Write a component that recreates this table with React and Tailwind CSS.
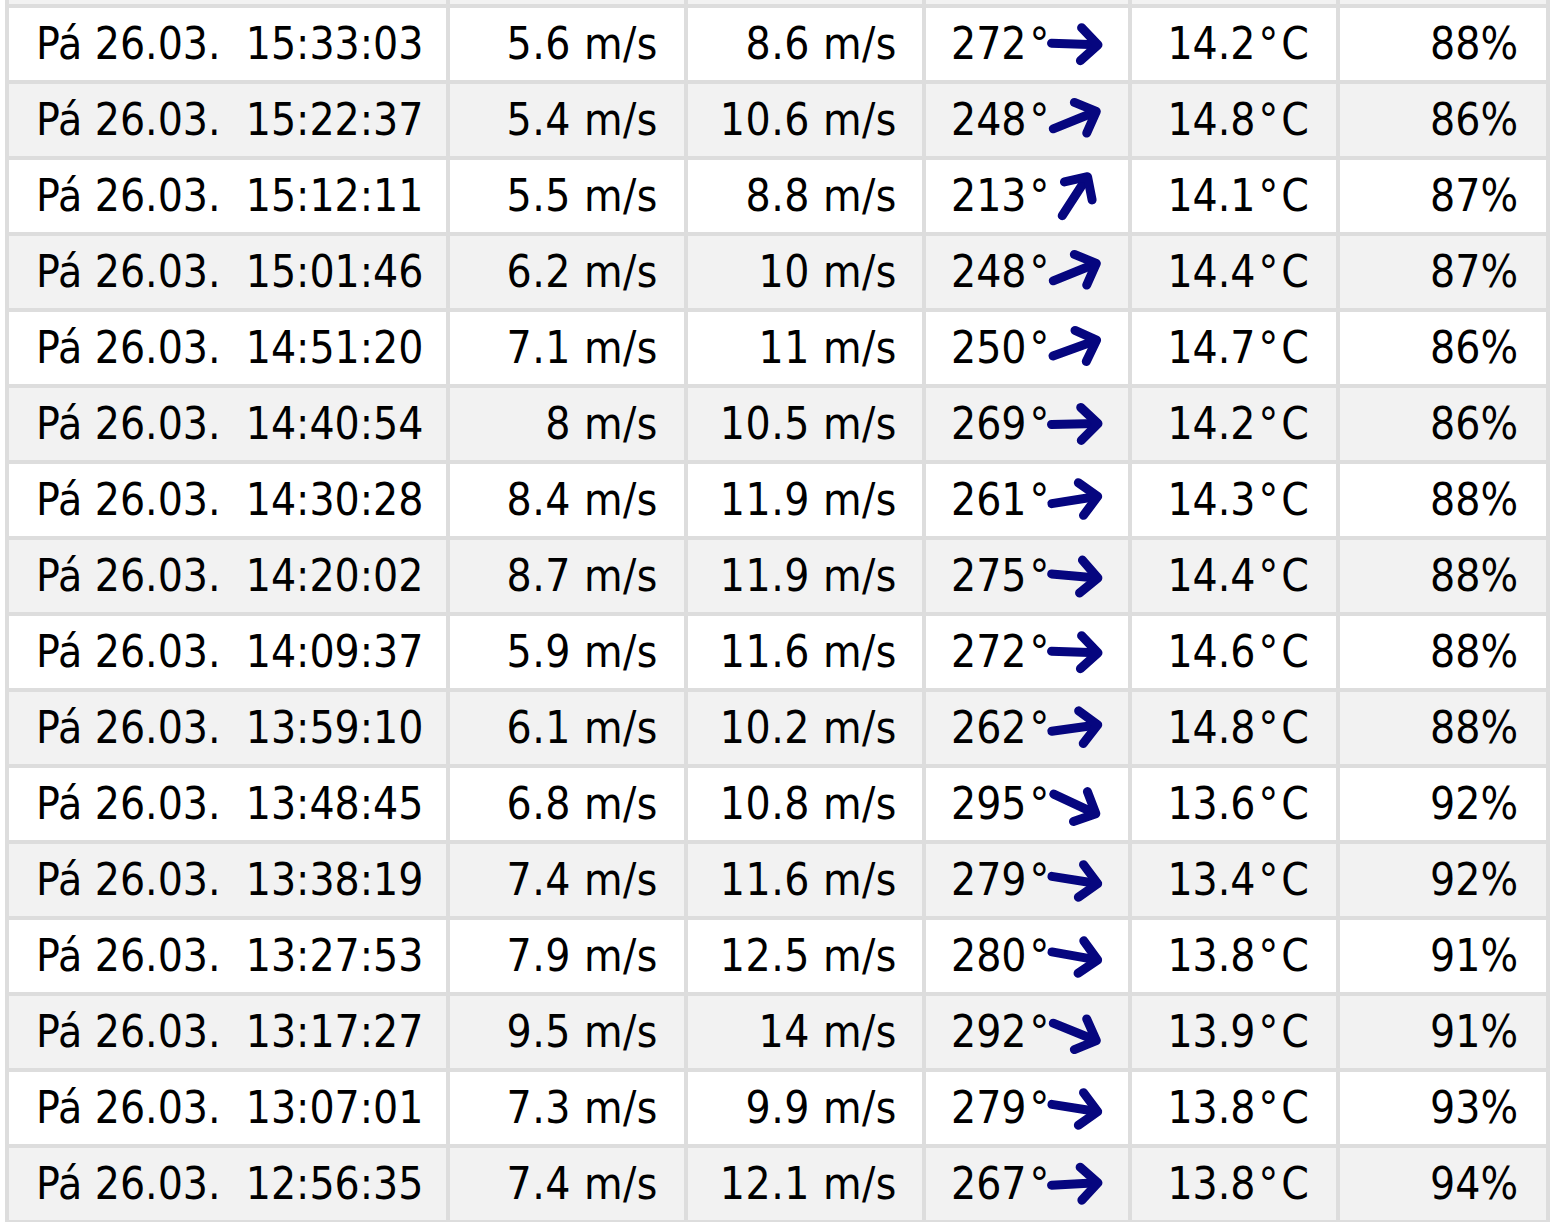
import React from 'react'

const rows = [
  ['15:33:03', '5.6', '8.6', 272, '14.2', 88],
  ['15:22:37', '5.4', '10.6', 248, '14.8', 86],
  ['15:12:11', '5.5', '8.8', 213, '14.1', 87],
  ['15:01:46', '6.2', '10', 248, '14.4', 87],
  ['14:51:20', '7.1', '11', 250, '14.7', 86],
  ['14:40:54', '8', '10.5', 269, '14.2', 86],
  ['14:30:28', '8.4', '11.9', 261, '14.3', 88],
  ['14:20:02', '8.7', '11.9', 275, '14.4', 88],
  ['14:09:37', '5.9', '11.6', 272, '14.6', 88],
  ['13:59:10', '6.1', '10.2', 262, '14.8', 88],
  ['13:48:45', '6.8', '10.8', 295, '13.6', 92],
  ['13:38:19', '7.4', '11.6', 279, '13.4', 92],
  ['13:27:53', '7.9', '12.5', 280, '13.8', 91],
  ['13:17:27', '9.5', '14', 292, '13.9', 91],
  ['13:07:01', '7.3', '9.9', 279, '13.8', 93],
  ['12:56:35', '7.4', '12.1', 267, '13.8', 94],
]

function WindArrow({ deg }){
  // arrow points where the wind blows to: 270° = east
  return (
    <svg width="56" height="44" viewBox="2 0 56 44" className="ml-[-2px] shrink-0"
      style={{ transform: `rotate(${deg - 270}deg)` }}>
      <g fill="none" stroke="#06067f" strokeWidth="9" strokeLinecap="round" strokeLinejoin="round">
        <path d="M6.5 22H52" />
        <path d="M36 5.5L53 22L36 38.5" />
      </g>
    </svg>
  )
}

export default function App(){
  return (
    <div className="min-h-screen bg-white pl-[5px]"
      style={{ fontFamily: '"DejaVu Sans Condensed", "DejaVu Sans", sans-serif' }}>
      <div className="grid w-max grid-cols-[437px_234px_234px_202px_204px_206px] gap-[4px] bg-[#dddddd] px-[4px] pb-[4px] text-[44px] font-stretch-condensed text-black leading-none">
        {/* bottom sliver of the row above, cut off by the screenshot */}
        <div className="h-[4px] bg-[#f2f2f2]" />
        <div className="h-[4px] bg-[#f2f2f2]" />
        <div className="h-[4px] bg-[#f2f2f2]" />
        <div className="h-[4px] bg-[#f2f2f2]" />
        <div className="h-[4px] bg-[#f2f2f2]" />
        <div className="h-[4px] bg-[#f2f2f2]" />
        {rows.map((r, i) => {
          const bg = i % 2 === 0 ? 'bg-white' : 'bg-[#f2f2f2]'
          return (
            <React.Fragment key={r[0]}>
              <div className={`${bg} h-[72px] flex items-center pl-[27px] whitespace-pre`}>Pá 26.03.{'\u00a0 '}{r[0]}</div>
              <div className={`${bg} h-[72px] flex items-center justify-end pr-[26px] tracking-[0.5px]`}>{r[1]} m/s</div>
              <div className={`${bg} h-[72px] flex items-center justify-end pr-[25px] tracking-[0.5px]`}>{r[2]} m/s</div>
              <div className={`${bg} h-[72px] flex items-center pl-[25px]`}>
                <span>{r[3]}<span className="ml-[3px]">°</span></span>
                <WindArrow deg={r[3]} />
              </div>
              <div className={`${bg} h-[72px] flex items-center justify-end pr-[27px]`}>
                {r[4]}<span className="mx-[3px]">°</span>C
              </div>
              <div className={`${bg} h-[72px] flex items-center justify-end pr-[28px]`}>{r[5]}%</div>
            </React.Fragment>
          )
        })}
      </div>
    </div>
  )
}
